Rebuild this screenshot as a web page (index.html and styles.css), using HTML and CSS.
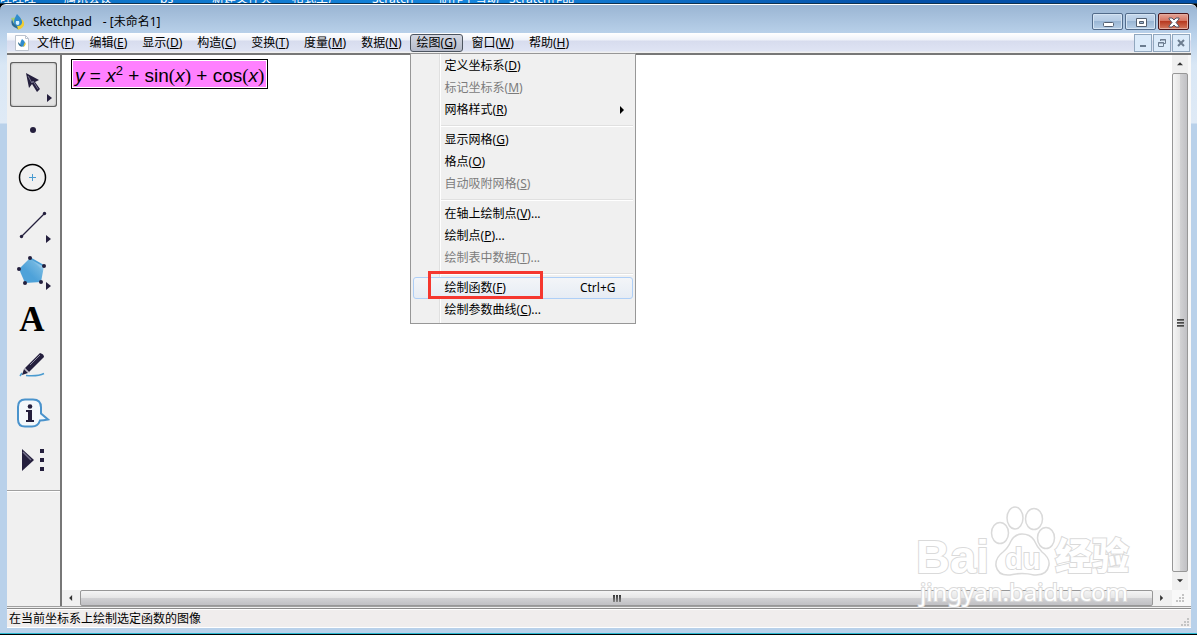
FILE: index.html
```html
<!DOCTYPE html>
<html lang="zh-CN">
<head>
<meta charset="utf-8">
<title>Sketchpad - [未命名1]</title>
<link rel="stylesheet" href="styles.css">
</head>
<body>
<div class="desktop" aria-hidden="true">
  <span>旺旺旺</span><span>腾讯会议</span><span>ps</span><span>新建文件夹</span><span>格式工厂</span><span>Scratch</span><span>制作下雪动</span><span>Scratch作品</span>
</div>
<div class="window">
  <header class="titlebar">
    <svg class="app-icon" width="18" height="18" viewBox="0 0 18 18">
      <path d="M2 5 9 17 15 12 10 4Z" fill="#a9cf72"/>
      <path d="M10 5q6 2 5 7-2 5-7 4Z" fill="#f0cd35"/>
      <path d="M8 1q6 6 5 9-1 3-4 3-4 0-4-4 0-3 3-8Z" fill="#2f8ccd"/>
      <path d="M7 8q-1 4 2 4 2-1 1-4Z" fill="#d6f1ff"/>
      <path d="M3 6q-3 7 6 10l-1-3Q4 11 3 6Z" fill="#2c6b91"/>
    </svg>
    <h1 class="title"><span>Sketchpad</span><span>- [未命名1]</span></h1>
    <div class="caption-buttons">
      <button class="caption" aria-label="最小化"><svg width="12" height="12" viewBox="0 0 12 12"><rect x="1.500" y="6.500" width="10" height="4" rx="1" fill="#fff" stroke="#535f70"/></svg></button>
      <button class="caption" aria-label="最大化"><svg width="12" height="12" viewBox="0 0 12 12"><path d="M1.500 2.500h10v8h-10Z" fill="#fff" stroke="#535f70"/><path d="M4.500 5.500h4v2h-4Z" fill="#9bb4cf" stroke="#535f70"/></svg></button>
      <button class="caption close" aria-label="关闭"><svg width="12" height="12" viewBox="0 0 12 12"><path d="M1 2h3l2 2 2-2h3v1L8 6.500 11 10v1H8L6 9l-2 2H1v-1l3-3.500L1 3Z" fill="#fff" stroke="#535666"/></svg></button>
    </div>
  </header>

  <main class="client">
    <nav class="menubar">
      <svg class="doc-icon" width="14" height="16" viewBox="0 0 14 16">
        <path d="M.5.5h10l3 3v12H.5Z" fill="#fff" stroke="#bcc3ce"/><path d="M10.500.5v3h3" fill="none" stroke="#bcc3ce"/>
        <path d="M7 4q4 3 3 6t-4 1q-2-2 1-7Z" fill="#2f8ccd"/><path d="M3 7q0 4 4 5l-1-2Z" fill="#2c6b91"/><path d="M10 7q2 3-2 5Z" fill="#f0cd35"/>
      </svg>
      <button>文件(<u>F</u>)</button><button>编辑(<u>E</u>)</button><button>显示(<u>D</u>)</button><button>构造(<u>C</u>)</button><button>变换(<u>T</u>)</button><button>度量(<u>M</u>)</button><button>数据(<u>N</u>)</button>
      <div class="menu-host">
        <button class="open" aria-expanded="true">绘图(<u>G</u>)</button>
        <div class="dropdown">
          <button>定义坐标系(<u>D</u>)</button>
          <button disabled>标记坐标系(<u>M</u>)</button>
          <button>网格样式(<u>R</u>)<svg class="submenu" width="4" height="8" viewBox="0 0 4 8"><path d="M0 0l4 4-4 4Z"/></svg></button>
          <hr>
          <button>显示网格(<u>G</u>)</button>
          <button>格点(<u>O</u>)</button>
          <button disabled>自动吸附网格(<u>S</u>)</button>
          <hr>
          <button>在轴上绘制点(<u>V</u>)...</button>
          <button>绘制点(<u>P</u>)...</button>
          <button disabled>绘制表中数据(<u>T</u>)...</button>
          <hr>
          <button class="hot">绘制函数(<u>F</u>)<span class="shortcut">Ctrl+G</span><span class="marker"></span></button>
          <button>绘制参数曲线(<u>C</u>)...</button>
        </div>
      </div>
      <button>窗口(<u>W</u>)</button><button>帮助(<u>H</u>)</button>
      <div class="doc-buttons">
        <button aria-label="最小化文档"><svg width="10" height="10" viewBox="0 0 10 10"><path d="M2 8h6" stroke="#6c7d90" stroke-width="2"/></svg></button>
        <button aria-label="还原文档"><svg width="10" height="10" viewBox="0 0 10 10"><path d="M3.500 3V1.500h5v4H7M1.500 4.500h5v4h-5ZM3 2h6M1 5h6" fill="none" stroke="#6c7d90"/></svg></button>
        <button aria-label="关闭文档"><svg width="10" height="10" viewBox="0 0 10 10"><path d="M2 2l6 6M8 2 2 8" stroke="#6c7d90" stroke-width="2"/></svg></button>
      </div>
    </nav>

    <div class="workspace">
      <aside class="toolbar">
        <button class="selected" aria-label="移动箭头工具"><svg viewBox="0 0 47 45"><path d="M16 11 29 18l-4 2 5 7-3 3-5-8-3 4Z" fill="#241f3d"/><path d="M18 14l4 7 1-2 5 8" fill="none" stroke="#77748d"/><path d="M37 32l5 4-5 4Z" fill="#241f3d"/></svg></button>
        <button aria-label="点工具"><svg viewBox="0 0 47 45"><circle cx="23" cy="21" r="3" fill="#241f3d"/></svg></button>
        <button aria-label="圆工具"><svg viewBox="0 0 47 45"><circle cx="22.500" cy="21.500" r="13" fill="none" stroke="#000" stroke-width="1.500"/><path d="M19 21.500h7M22.500 18v7" stroke="#4a9bd0"/></svg></button>
        <button aria-label="线段工具"><svg viewBox="0 0 47 45"><path d="M11.500 33.500l23-23" stroke="#241f3d" stroke-width="1.300"/><circle cx="11.500" cy="33.500" r="1.700" fill="#241f3d"/><circle cx="34.500" cy="10.500" r="1.700" fill="#241f3d"/><path d="M36 32l5 4-5 4Z" fill="#241f3d"/></svg></button>
        <button aria-label="多边形工具"><svg viewBox="0 0 47 45">
          <defs><linearGradient id="poly" x1="1" y1="0" x2=".4" y2=".6"><stop offset="0" stop-color="#4a9fd6"/><stop offset=".2" stop-color="#cde7f7"/><stop offset=".5" stop-color="#6fb5e0"/><stop offset="1" stop-color="#4ea2d9"/></linearGradient></defs>
          <path d="M20 8l14 8-3 16-16 1L9 19Z" fill="url(#poly)"/><path d="M20 8l14 8" stroke="#4a9fd6" stroke-width="1.500"/>
          <g fill="#241f3d"><circle cx="20" cy="8" r="2"/><circle cx="34" cy="16" r="2"/><circle cx="31" cy="32" r="2"/><circle cx="15" cy="33" r="2"/><circle cx="9" cy="19" r="2"/><path d="M36 32l5 4-5 4Z"/></g></svg></button>
        <button class="text-tool" aria-label="文本工具">A</button>
        <button aria-label="标记工具"><svg viewBox="0 0 47 45"><path d="M10 32l2-3M16 31.500q12 1 18-2" fill="none" stroke="#4a9bd0" stroke-width="1.500"/><path d="M30 9q4 1 4 4L19 28l-4-4Z" fill="#241f3d"/><path d="M14 25l4 4-6 2Z" fill="#241f3d"/><path d="M20 21l10-10M14.500 24l4.500 4.500" stroke="#8d8aa0"/></svg></button>
        <button aria-label="信息工具"><svg viewBox="0 0 47 45"><path d="M15 8.500h8q8 0 8 8v6l7 6q-5 1-8 1-2 6-8 6h-7q-7 0-7-7V16q0-7.500 7-7.500Z" fill="#f4f8fb" stroke="#4a93cc" stroke-width="2"/><circle cx="20" cy="15.500" r="2.300" fill="#241f3d"/><path d="M16 19h6v10h2v2h-8v-2h2v-8h-2Z" fill="#241f3d"/></svg></button>
        <button aria-label="自定义工具"><svg viewBox="0 0 47 45"><path d="M12 11l12 11-12 11Z" fill="#241f3d"/><path d="M13 14l8 8" stroke="#77748d" stroke-width="1.500"/><path d="M30 11h4v4h-4ZM30 20h4v4h-4ZM30 29h4v4h-4Z" fill="#241f3d"/></svg></button>
        <hr>
      </aside>
      <section class="sheet">
        <div class="canvas">
          <div class="formula"><i>y</i> = <i>x</i><sup>2</sup> + sin<b>(</b><i>x</i><b>)</b> + cos<b>(</b><i>x</i><b>)</b></div>
        </div>
        <div class="scroll vertical">
          <button aria-label="向上"><svg width="6" height="4" viewBox="0 0 8 5"><path d="M4 0l4 4H0Z"/></svg></button>
          <div class="thumb"><i></i><i></i><i></i></div>
          <button aria-label="向下"><svg width="6" height="4" viewBox="0 0 8 5"><path d="M0 0h8L4 4Z"/></svg></button>
        </div>
        <div class="scroll horizontal">
          <button aria-label="向左"><svg width="4" height="6" viewBox="0 0 5 8"><path d="M4 0v8L0 4Z"/></svg></button>
          <div class="thumb"><i></i><i></i><i></i></div>
          <button aria-label="向右"><svg width="4" height="6" viewBox="0 0 5 8"><path d="M0 0l4 4-4 4Z"/></svg></button>
        </div>
        <div class="grip"><svg width="8" height="8" viewBox="0 0 8 8"><path d="M6 0h2v2H6ZM3 3h2v2H3ZM6 3h2v2H6ZM0 6h2v2H0ZM3 6h2v2H3ZM6 6h2v2H6Z"/></svg></div>
      </section>
    </div>

    <footer class="status"><span>在当前坐标系上绘制选定函数的图像</span><svg width="8" height="8" viewBox="0 0 8 8"><path d="M6 0h2v2H6ZM3 3h2v2H3ZM6 3h2v2H6ZM0 6h2v2H0ZM3 6h2v2H3ZM6 6h2v2H6Z"/></svg></footer>
  </main>

  <svg class="watermark" width="220" height="110" viewBox="0 0 220 110">
    <g fill="#fff" stroke="#dadada" stroke-width="1.500">
      <text class="wm-brand" x="1" y="73">Bai</text>
      <ellipse cx="85" cy="33" rx="8.500" ry="10.500"/><ellipse cx="100" cy="18" rx="8" ry="11"/><ellipse cx="119" cy="19" rx="8.500" ry="10.500"/><ellipse cx="131" cy="38" rx="8.500" ry="10.500"/>
      <path d="M107 34q8 0 12 6 3 7 8 12 8 6 7 13-2 11-15 10-12-3-24 0-12 1-14-9-1-8 7-14 5-4 8-11 4-7 11-7Z"/>
      <text class="wm-du" x="90" y="69">du</text>
      <text class="wm-cjk" x="140" y="70">经验</text>
    </g>
    <text class="wm-url" x="5" y="101">jingyan.baidu.com</text>
  </svg>
</div>
</body>
</html>
```
FILE: styles.css
```css
* { box-sizing: border-box; }

body {
  margin: 0;
  height: 100vh;
  display: flex;
  flex-direction: column;
  overflow: hidden;
  background: #000;
  border-bottom: 1px solid #000;
  color: #000;
  font: 12px/16px "Noto Sans", "Noto Sans CJK SC", sans-serif;
}

button {
  margin: 0;
  padding: 0;
  border: 0;
  background: none;
  color: inherit;
  font: inherit;
}

svg { display: block; }

/* Desktop strip behind the window */
.desktop {
  flex: none;
  height: 4px;
  overflow: hidden;
  display: grid;
  grid-template-columns: 64px 96px 52px 80px 80px 67px 70px 1fr;
  align-items: end;
  align-content: end;
  background: linear-gradient(90deg, #0a6fc4, #1685dc 40%, #0450a8 75%, #0450a8);
  border-bottom: 1px solid #10324f;
  color: #fff;
  line-height: 8px;
  white-space: nowrap;
}

/* Window frame */
.window {
  position: relative;
  flex: 1;
  min-height: 0;
  display: flex;
  flex-direction: column;
  padding: 0 6px 5px 7px;
  background: linear-gradient(#9ab5d3, #b9d1ea 29px, #d9e7f5 60px, #dfeaf6 118px, #b9d1ea 119px);
  border-top: 1px solid #fff;
  border-bottom: 1px solid #2ab8d0;
  border-radius: 6px 6px 0 0;
}

.titlebar {
  flex: none;
  height: 28px;
  display: flex;
  align-items: flex-start;
  padding-left: 2px;
}

.app-icon { margin-top: 8px; }

.title {
  flex: 1;
  display: flex;
  gap: 11px;
  margin: 8px 0 0 6px;
  font-size: 12px;
  line-height: 18px;
  font-weight: 400;
}

.caption-buttons {
  display: flex;
  gap: 2px;
  margin: 8px 2px 0 0;
}

.caption {
  width: 31px;
  height: 17px;
  display: grid;
  place-items: center;
  border: 1px solid #526b8a;
  border-radius: 2px;
  background: linear-gradient(#c5d8ed, #b3cae3 50%, #9ab6d4 50%, #b7cfe7);
  box-shadow: inset 0 0 0 1px #d5e4f3;
}

.close {
  border-color: #4b1418;
  background: linear-gradient(#e5a497, #d4705c 50%, #b73a21 50%, #d4795f);
  box-shadow: inset 0 0 0 1px #e3ab9e;
}

.client {
  flex: 1;
  min-height: 0;
  display: flex;
  flex-direction: column;
  background: #f0f0f0;
}

/* Menu bar */
.menubar {
  flex: none;
  height: 22px;
  display: flex;
  gap: 1px;
  align-items: flex-start;
  background: linear-gradient(#fff, #eef1f9 7px, #d7dcee 8px, #dfe4f4 18px, #f0f0f0 19px);
  border-bottom: 2px solid #777;
}

.doc-icon { margin: 2px 0 0 8px; }

.menubar > button,
.menu-host > button {
  flex: none;
  height: 18px;
  padding: 0 6px;
  margin-top: 1px;
}

.menubar > button { border: 1px solid transparent; }

.menubar u,
.dropdown u { text-underline-offset: 1px; }

.menu-host { position: relative; }

.menu-host > .open {
  display: block;
  border: 1px solid #4d5560;
  border-radius: 3px;
  background: linear-gradient(#d3d7e2, #b5bac9);
}

.dropdown {
  position: absolute;
  z-index: 2;
  left: 0;
  top: 20px;
  width: 226px;
  padding: 1px 2px 2px;
  border: 1px solid #979797;
  background: linear-gradient(90deg, #f0f0f0 28px, #e0e0e0 28px, #e0e0e0 29px, #fff 29px, #fff 30px, #f0f0f0 30px);
}

.dropdown button {
  position: relative;
  display: flex;
  align-items: center;
  width: 100%;
  height: 22px;
  padding: 0 16px 0 31px;
  border: 1px solid transparent;
  border-radius: 3px;
  white-space: nowrap;
}

.dropdown button:disabled { color: #7c7c7c; }

.dropdown hr {
  height: 2px;
  margin: 4px 0 2px 28px;
  border: 0;
  border-top: 1px solid #e0e0e0;
  background: #fff;
}

.dropdown .hot {
  border-color: #aecff7;
  background: linear-gradient(#f3f5f8, #e6ecf4);
}

.submenu { margin-left: auto; margin-right: -8px; }
.shortcut { margin-left: auto; }

.marker {
  position: absolute;
  left: 14px;
  top: -7px;
  width: 115px;
  height: 28px;
  border: 3px solid #f5372f;
}

.doc-buttons {
  display: flex;
  gap: 1px;
  margin: 1px 1px 0 auto;
}

.doc-buttons button {
  width: 18px;
  height: 18px;
  display: grid;
  place-items: center;
  border: 1px solid #91a7be;
  background: #dcebfa;
}

/* Tool palette and drawing area */
.workspace {
  flex: 1;
  min-height: 0;
  display: flex;
  border-bottom: 1px solid #a0a0a0;
}

.toolbar {
  flex: none;
  width: 55px;
  display: flex;
  flex-direction: column;
  gap: 2px;
  padding-top: 7px;
  border-right: 2px solid #777;
}

.toolbar button {
  flex: none;
  width: 47px;
  height: 45px;
  margin-left: 3px;
}

.toolbar .selected {
  border-radius: 3px;
  background: #e4e4e4;
  box-shadow: inset 0 0 0 1px #5f5f5f, inset 0 0 2px 1px #999;
}

.toolbar .text-tool {
  padding-right: 3px;
  font: bold 35px/45px "Liberation Serif", serif;
}

.toolbar hr {
  width: 100%;
  height: 2px;
  margin: 5px 0 0;
  border: 0;
  border-top: 1px solid #a0a0a0;
  background: #fff;
}

.sheet {
  flex: 1;
  min-width: 0;
  display: grid;
  grid-template: minmax(0, 1fr) 16px / minmax(0, 1fr) 16px;
  padding-right: 3px;
  background: #f8f8f8;
}

.canvas {
  padding: 4px 9px;
  background: #fff;
}

.formula {
  width: max-content;
  height: 30px;
  padding: 0 3px;
  border: 1px solid #000;
  box-shadow: inset 0 0 0 1px #fff;
  background: #ff80ff;
  font: 19px/31px "Liberation Sans", sans-serif;
}

.formula sup {
  font-size: 13px;
  line-height: 0;
  vertical-align: 7px;
}

.formula b {
  font-family: "Liberation Serif", serif;
  font-weight: 400;
}

.scroll {
  display: flex;
  background: #f0f0f0;
}

.scroll button {
  flex: none;
  width: 18px;
  height: 16px;
  display: grid;
  place-items: center;
  fill: #333;
}

.vertical { flex-direction: column; }
.vertical button { width: 16px; height: 18px; }
.horizontal { padding-right: 1px; }

.thumb {
  flex: 1;
  display: flex;
  align-items: center;
  justify-content: center;
  gap: 1px;
  border: 1px solid #979797;
  border-radius: 2px;
}

.vertical .thumb {
  flex-direction: column;
  background: linear-gradient(90deg, #f5f5f5, #e5e5e5 50%, #d2d2d4 50%, #c0c0c4);
}

.horizontal .thumb { background: linear-gradient(#f5f5f5, #e5e5e5 50%, #d2d2d4 50%, #c0c0c4); }
.thumb i { background: linear-gradient(#333, #888); }
.vertical i { width: 7px; height: 2px; }
.horizontal i { width: 2px; height: 7px; }

.grip {
  display: grid;
  place-items: center;
  fill: #c4c4c4;
}

.status {
  flex: none;
  height: 20px;
  display: flex;
  align-items: center;
  justify-content: space-between;
  padding: 1px 2px 0;
  margin-top: 1px;
  background: #f0eded;
  border-top: 1px solid #8c8c8c;
  box-shadow: inset 0 1px #fff, inset 0 -1px #fff;
}

.status svg { margin-top: 6px; fill: #c4c4c4; }

/* Translucent brand mark over the lower right corner */
.watermark {
  position: absolute;
  right: 62px;
  bottom: 23px;
  pointer-events: none;
}

.watermark text { paint-order: stroke; stroke-width: 2px; }
.wm-brand { font: bold 47px "Liberation Sans", sans-serif; }
.wm-du { font: bold 29px "Liberation Sans", sans-serif; }
.wm-cjk { font: 900 37px "Noto Sans CJK SC", sans-serif; }

.wm-url {
  font: 24px "Noto Sans", sans-serif;
  fill: #fff;
  stroke: #dadada;
}
```
